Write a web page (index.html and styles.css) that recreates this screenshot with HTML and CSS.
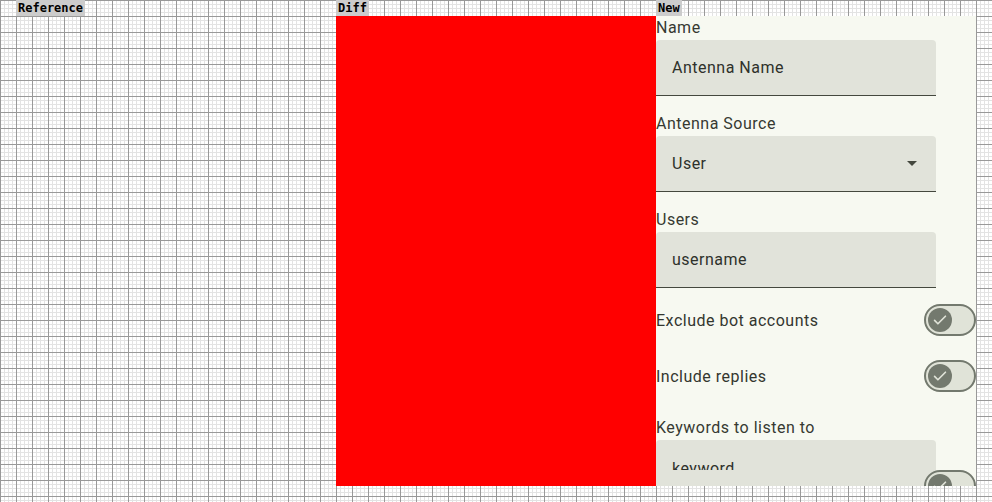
FILE: index.html
```html
<!DOCTYPE html>
<html>
<head>
<meta charset="utf-8">
<link rel="stylesheet" href="styles.css">
</head>
<body>
<div class="board">
  <section class="col">
    <div class="tag">Reference</div>
    <div class="panel panel-empty"></div>
  </section>
  <section class="col">
    <div class="tag">Diff</div>
    <div class="panel panel-diff"></div>
  </section>
  <section class="col">
    <div class="tag">New</div>
    <div class="panel panel-new">
      <div class="field">
        <div class="label">Name</div>
        <div class="input"><span class="value">Antenna Name</span></div>
      </div>
      <div class="field">
        <div class="label">Antenna Source</div>
        <div class="input select"><span class="value">User</span><span class="caret"></span></div>
      </div>
      <div class="field">
        <div class="label">Users</div>
        <div class="input"><span class="value">username</span></div>
      </div>
      <div class="toggle-row">
        <span class="toggle-label">Exclude bot accounts</span>
        <span class="switch"><span class="thumb"><svg viewBox="0 0 24 24" width="20" height="20"><path d="M5.5 12.5l4 4L18.5 7.5" fill="none" stroke="#e0e3d8" stroke-width="2" stroke-linecap="round" stroke-linejoin="round"/></svg></span></span>
      </div>
      <div class="toggle-row">
        <span class="toggle-label">Include replies</span>
        <span class="switch"><span class="thumb"><svg viewBox="0 0 24 24" width="20" height="20"><path d="M5.5 12.5l4 4L18.5 7.5" fill="none" stroke="#e0e3d8" stroke-width="2" stroke-linecap="round" stroke-linejoin="round"/></svg></span></span>
      </div>
      <div class="field">
        <div class="label">Keywords to listen to</div>
        <div class="kw-row">
          <div class="input kw"><div class="kw-clip"><span class="value">keyword</span></div></div>
          <span class="switch kw-switch"><span class="thumb"><svg viewBox="0 0 24 24" width="20" height="20"><path d="M5.5 12.5l4 4L18.5 7.5" fill="none" stroke="#e0e3d8" stroke-width="2" stroke-linecap="round" stroke-linejoin="round"/></svg></span></span>
        </div>
      </div>
    </div>
  </section>
</div>
</body>
</html>
```

FILE: styles.css
```css
html {
  height: 100%;
  background-color: #ffffff;
  background-image:
    linear-gradient(to right, #999999 1px, transparent 1px),
    linear-gradient(to bottom, #999999 1px, transparent 1px),
    linear-gradient(to right, #e3e3e3 1px, transparent 1px),
    linear-gradient(to bottom, #e3e3e3 1px, transparent 1px);
  background-size: 16px 16px, 16px 16px, 4px 4px, 4px 4px;
}

body {
  margin: 0;
  height: 100%;
  overflow: hidden;
}

.board {
  display: flex;
  padding-left: 16px;
}

.col {
  display: flex;
  flex-direction: column;
  align-items: flex-start;
  width: 320px;
}

.tag {
  height: 16px;
  line-height: 16px;
  padding: 0 2px;
  background: #cccccc;
  color: #000;
  font-family: "DejaVu Sans Mono", monospace;
  font-weight: bold;
  font-size: 12px;
}

.panel {
  width: 320px;
  height: 470px;
}

.panel-diff {
  background: #ff0000;
}

.panel-new {
  background: #f7f9f1;
  overflow: hidden;
  display: flex;
  flex-direction: column;
  font-family: Roboto, "Liberation Sans", sans-serif;
  font-size: 16px;
  letter-spacing: 0.5px;
  color: #33362f;
}

.field {
  display: flex;
  flex-direction: column;
  margin-bottom: 16px;
}

.label {
  height: 24px;
  line-height: 24px;
  color: #363932;
}

.input {
  width: 280px;
  height: 56px;
  box-sizing: border-box;
  background: #e1e3da;
  border-radius: 4px 4px 0 0;
  border-bottom: 1px solid #44483e;
  display: flex;
  align-items: center;
  padding: 0 16px;
  line-height: 24px;
}

.value {
  color: #2e312b;
}

.select {
  justify-content: space-between;
  padding-right: 19px;
}

.caret {
  width: 0;
  height: 0;
  border-left: 5px solid transparent;
  border-right: 5px solid transparent;
  border-top: 5px solid #44483e;
}

.toggle-row {
  display: flex;
  align-items: center;
  justify-content: space-between;
  height: 32px;
  margin-bottom: 24px;
}

.toggle-label {
  color: #33362f;
}

.switch {
  width: 52px;
  height: 32px;
  box-sizing: border-box;
  border: 2px solid #73796e;
  border-radius: 16px;
  background: #e0e3d8;
  display: flex;
  align-items: center;
  padding-left: 2px;
  flex: none;
}

.thumb {
  width: 24px;
  height: 24px;
  border-radius: 50%;
  background: #73796e;
  display: flex;
  align-items: center;
  justify-content: center;
}

.kw-row {
  display: flex;
  align-items: flex-start;
}

.kw {
  align-items: flex-start;
  flex: none;
}

.kw-clip {
  height: 30px;
  overflow: hidden;
  padding-top: 17px;
  box-sizing: border-box;
}

.kw-switch {
  margin-left: -12px;
  margin-top: 30px;
}
```
